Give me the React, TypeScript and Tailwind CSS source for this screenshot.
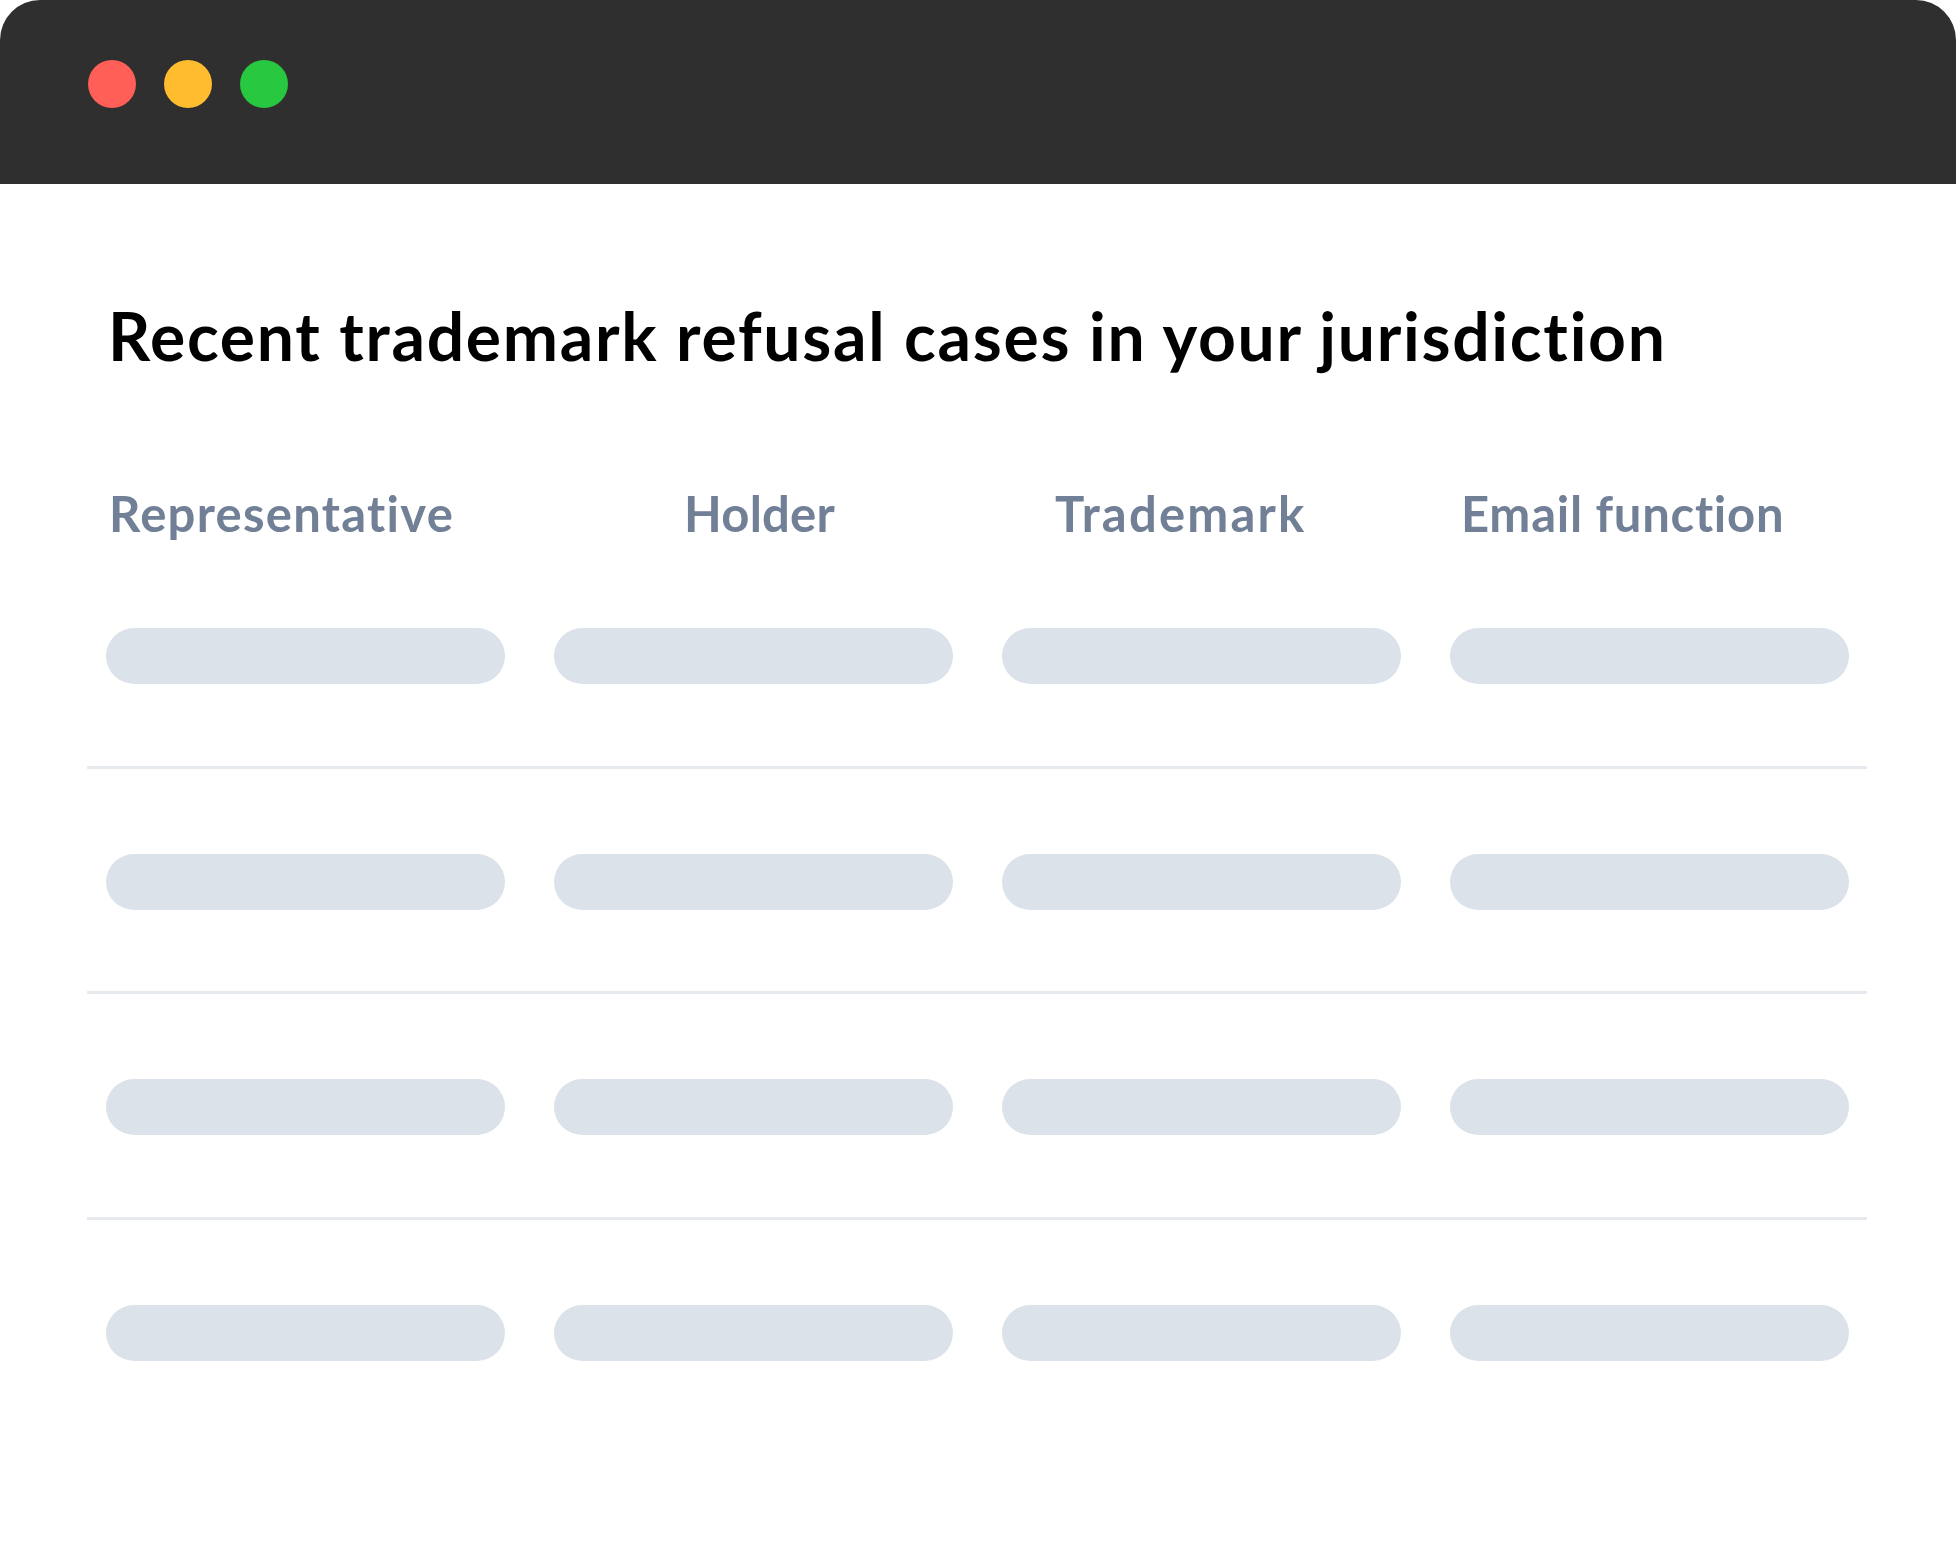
import React from 'react';

// Column headers, each nudged to where it sits over its column in the mockup
const columns = [
  { label: 'Representative', cls: 'pl-[3px] tracking-[0.026em]' },
  { label: 'Holder', cls: 'pl-[130px] tracking-[0.005em]' },
  { label: 'Trademark', cls: 'pl-[53px] tracking-[0.045em]' },
  { label: 'Email function', cls: 'pl-[11px] tracking-[0.015em]' },
];

const rows = [0, 1, 2, 3];

const WindowDots = () => (
  <div className="flex items-center gap-[28px]">
    <span className="block h-[48px] w-[48px] rounded-full bg-[#ff5f57]" />
    <span className="block h-[48px] w-[48px] rounded-full bg-[#febc2e]" />
    <span className="block h-[48px] w-[48px] rounded-full bg-[#28c840]" />
  </div>
);

const SkeletonRow = ({ last }: { last: boolean }) => (
  <div
    className={`grid grid-cols-4 gap-[49px] pl-[19px] pr-[18px] pt-[85px] pb-[81.5px] ${
      last ? '' : 'border-b-[3px] border-[#e6eaef]'
    }`}
  >
    {columns.map((c) => (
      <div key={c.label} className="h-[56px] rounded-full bg-[#dce2ea]" />
    ))}
  </div>
);

export default function App() {
  return (
    <div
      className="min-h-[1564px] w-full bg-white [font-variant-ligatures:none]"
      style={{ fontFamily: 'Lato, "Noto Sans", sans-serif' }}
    >
      {/* browser chrome */}
      <div className="flex h-[184px] items-start rounded-t-[40px] bg-[#2f2f2f] pl-[88px] pt-[60px]">
        <WindowDots />
      </div>

      <div className="pt-[119px]">
        <h1 className="ml-[108px] text-[66px] font-bold leading-none tracking-[0.026em] text-black">
          Recent trademark refusal cases in your jurisdiction
        </h1>

        <div className="ml-[87px] mt-[120px] w-[1780px]">
          <div className="grid grid-cols-4 gap-[49px] pl-[19px] pr-[18px]">
            {columns.map((c) => (
              <div
                key={c.label}
                className={`${c.cls} whitespace-nowrap text-[49px] font-bold leading-none text-[#718096]`}
              >
                {c.label}
              </div>
            ))}
          </div>

          <div className="mt-[5px]">
            {rows.map((r) => (
              <SkeletonRow key={r} last={r === rows.length - 1} />
            ))}
          </div>
        </div>
      </div>
    </div>
  );
}
